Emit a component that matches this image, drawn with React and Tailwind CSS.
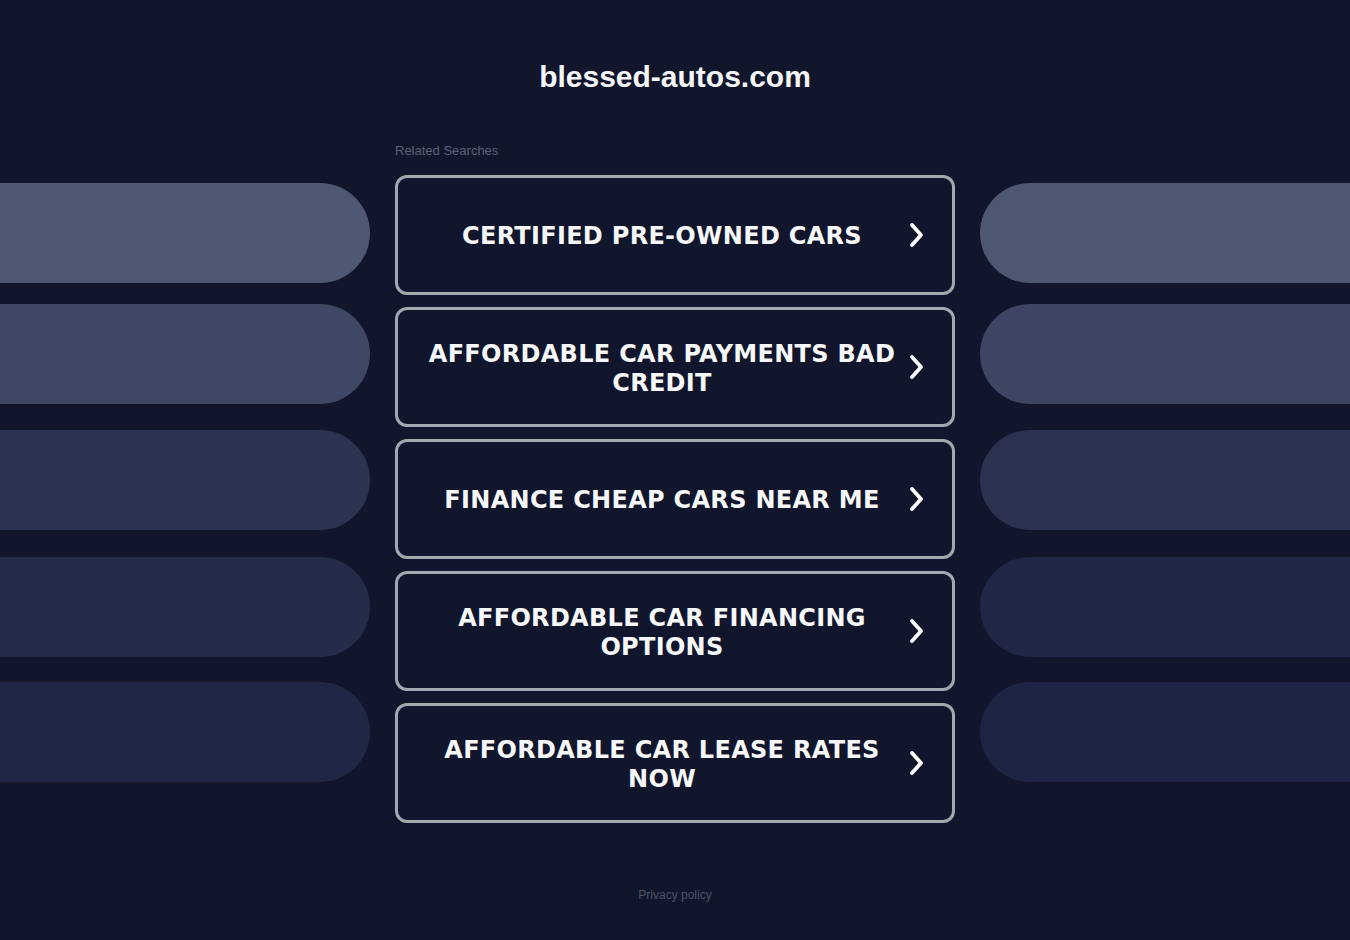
const searches = [
  "Certified Pre-Owned Cars",
  "Affordable Car Payments Bad Credit",
  "Finance Cheap Cars Near Me",
  "Affordable Car Financing Options",
  "Affordable Car Lease Rates Now",
];

function Chevron() {
  return (
    <svg width="18" height="26" viewBox="0 0 18 26" className="shrink-0">
      <path
        d="M4 3 L13 13 L4 23"
        fill="none"
        stroke="#ffffff"
        strokeWidth="3.8"
        strokeLinecap="round"
        strokeLinejoin="round"
      />
    </svg>
  );
}

function LeftPills() {
  return (
    <div className="flex flex-col pt-[183px]">
      <div className="h-[100px] rounded-r-full bg-[#4e5873]" />
      <div className="mt-[21px] h-[100px] rounded-r-full bg-[#3e4764]" />
      <div className="mt-[26px] h-[100px] rounded-r-full bg-[#2c3452]" />
      <div className="mt-[27px] h-[100px] rounded-r-full bg-[#242c4a]" />
      <div className="mt-[25px] h-[100px] rounded-r-full bg-[#1f2745]" />
    </div>
  );
}

function RightPills() {
  return (
    <div className="flex flex-col pt-[183px]">
      <div className="h-[100px] rounded-l-full bg-[#4d5772]" />
      <div className="mt-[21px] h-[100px] rounded-l-full bg-[#3d4563]" />
      <div className="mt-[26px] h-[100px] rounded-l-full bg-[#2b3250]" />
      <div className="mt-[27px] h-[100px] rounded-l-full bg-[#1f2646]" />
      <div className="mt-[25px] h-[100px] rounded-l-full bg-[#1e2544]" />
    </div>
  );
}

export default function App() {
  return (
    <div className="min-h-[940px] w-full overflow-hidden bg-[#11162c]">
      <div className="grid grid-cols-[370px_560px_370px] gap-x-[25px]">
        <LeftPills />

        <div className="flex flex-col">
          <h1 className="pt-[59px] text-center font-['Liberation_Sans',Arial,sans-serif] text-[30px] font-bold leading-[36px] text-[#f4f5f8]">
            blessed-autos.com
          </h1>
          <p className="mt-[48px] font-['Liberation_Sans',Arial,sans-serif] text-[13px] leading-[16px] text-[#5b6176]">
            Related Searches
          </p>

          <div className="mt-[16px] flex flex-col gap-[12px]">
            {searches.map((s) => (
              <a
                key={s}
                href="#"
                className="flex h-[120px] items-center rounded-[12px] border-[3px] border-[#a3a7b0] bg-[#11162c] pl-[22px] pr-[26px]"
              >
                <span className="flex-1 pt-[3px] text-center font-['DejaVu_Sans',Verdana,sans-serif] text-[24px] font-bold uppercase leading-[29px] tracking-[0.3px] text-[#f6f7f9]">
                  {s}
                </span>
                <span className="ml-[4px] flex w-[18px] justify-center">
                  <Chevron />
                </span>
              </a>
            ))}
          </div>

          <p className="mt-[64px] text-center font-['Liberation_Sans',Arial,sans-serif] text-[12px] leading-[16px] text-[#4c5268]">
            Privacy policy
          </p>
        </div>

        <RightPills />
      </div>
    </div>
  );
}
